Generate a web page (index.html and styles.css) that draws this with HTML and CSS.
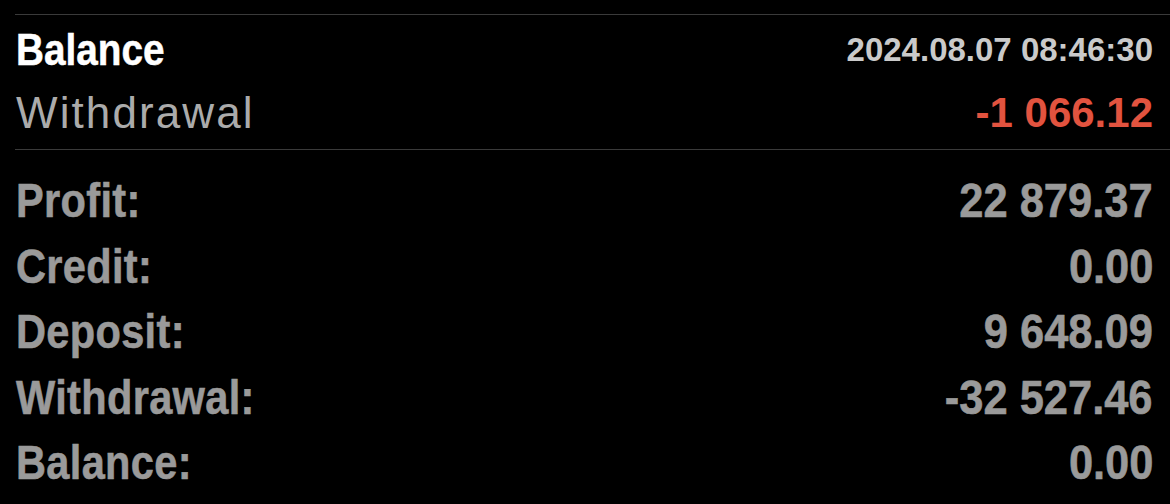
FILE: index.html
```html
<!DOCTYPE html>
<html lang="en">
<head>
    <meta charset="UTF-8">
    <meta name="viewport" content="width=device-width, initial-scale=1.0">
    <title>Balance</title>
    <link rel="stylesheet" href="styles.css">
</head>
<body>
    <div class="deal-header">
        <div class="deal-row top">
            <span class="deal-title">Balance</span>
            <span class="deal-time">2024.08.07 08:46:30</span>
        </div>
        <div class="deal-row sub">
            <span class="deal-type">Withdrawal</span>
            <span class="deal-amount negative">-1 066.12</span>
        </div>
    </div>

    <div class="summary">
        <div class="summary-row">
            <span class="summary-label">Profit:</span>
            <span class="summary-value">22 879.37</span>
        </div>
        <div class="summary-row">
            <span class="summary-label">Credit:</span>
            <span class="summary-value">0.00</span>
        </div>
        <div class="summary-row">
            <span class="summary-label">Deposit:</span>
            <span class="summary-value">9 648.09</span>
        </div>
        <div class="summary-row">
            <span class="summary-label">Withdrawal:</span>
            <span class="summary-value">-32 527.46</span>
        </div>
        <div class="summary-row">
            <span class="summary-label">Balance:</span>
            <span class="summary-value">0.00</span>
        </div>
    </div>
</body>
</html>
```

FILE: styles.css
```css
body {
    background-color: #000000;
    color: #9A9A9A;
    font-family: 'Liberation Sans', Arial, sans-serif;
    margin: 0;
    padding-top: 14px;
    overflow: hidden;
}

.deal-header {
    margin-left: 15px;
    border-top: 1px solid #3A3A3A;
    border-bottom: 1px solid #3A3A3A;
    padding: 0 17px 8px 1px;
}

.deal-row {
    display: flex;
    justify-content: space-between;
    align-items: center;
}

.deal-row.top {
    height: 70px;
    line-height: 70px;
}

.deal-row.sub {
    height: 56px;
    line-height: 56px;
}

/* no condensed face installed, so squeeze the bold one */
.deal-title {
    display: inline-block;
    color: #FFFFFF;
    font-weight: bold;
    font-size: 44px;
    transform: scaleX(0.88);
    transform-origin: left center;
    -webkit-text-stroke: 0.5px #FFFFFF;
}

.deal-time {
    color: #CACACA;
    font-weight: bold;
    font-size: 33px;
}

.deal-type {
    color: #ABABAB;
    font-size: 44px;
    letter-spacing: 2.1px;
}

.deal-amount {
    font-weight: bold;
    font-size: 42px;
}

.negative {
    color: #E2533F;
}

/* totals */
.summary {
    padding: 18px 17px 0 16px;
}

.summary-row {
    display: flex;
    justify-content: space-between;
    height: 65.5px;
    line-height: 65.5px;
    font-weight: bold;
    font-size: 48px;
    -webkit-text-stroke: 0.6px #9A9A9A;
}

.summary-label {
    display: inline-block;
    transform: scaleX(0.865);
    transform-origin: left center;
    letter-spacing: 0.4px;
}

.summary-value {
    display: inline-block;
    transform: scaleX(0.905);
    transform-origin: right center;
}
```
